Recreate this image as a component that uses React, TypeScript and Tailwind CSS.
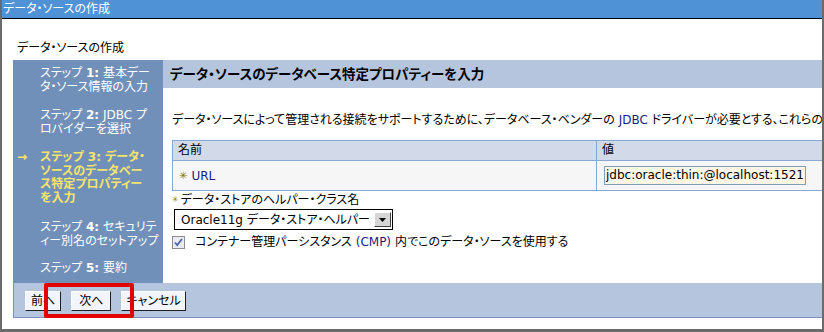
import React from "react";

const F = {
  fontFamily: '"DejaVu Sans", "Noto Sans CJK JP", sans-serif',
};

export default function App() {
  return (
    <div
      className="relative w-[824px] h-[332px] overflow-hidden bg-[#6b6b6b] text-black [font-feature-settings:'palt']"
      style={F}
    >
      <div className="absolute left-[2px] right-[2px] top-0 bottom-[3px] bg-white flex flex-col">
        {/* title bar */}
        <div className="h-[18px] bg-[#4f93d6] text-white text-[12px] leading-[18px] pl-[1px] whitespace-nowrap">
          データ・ソースの作成
        </div>
        <div className="h-[1px] bg-black" />
        {/* page title */}
        <div className="pl-[15px] pt-[21px] h-[41px] text-[12px] leading-[16px] whitespace-nowrap">
          データ・ソースの作成
        </div>
        {/* wizard */}
        <div className="ml-[11px] flex h-[223px]">
          <div className="w-[150px] shrink-0 bg-[#7190b9] text-white text-[12px] leading-[13.5px] pt-[7px] whitespace-nowrap overflow-hidden">
            <div className="pl-[27px]">
              ステップ <b>1:</b> 基本デー
              <br />
              タ・ソース情報の入力
            </div>
            <div className="pl-[27px] mt-[15px]">
              ステップ <b>2:</b> JDBC プ
              <br />
              ロバイダーを選択
            </div>
            <div className="flex mt-[15px] text-[#f6e46c] font-bold">
              <div className="w-[27px] pl-[4px]">→</div>
              <div>
                ステップ 3: データ・
                <br />
                ソースのデータベー
                <br />
                ス特定プロパティー
                <br />
                を入力
              </div>
            </div>
            <div className="pl-[27px] mt-[16px]">
              ステップ <b>4:</b> セキュリテ
              <br />
              ィー別名のセットアップ
            </div>
            <div className="pl-[27px] mt-[14px]">
              ステップ <b>5:</b> 要約
            </div>
          </div>
          <div className="flex-1 min-w-0 flex flex-col overflow-hidden">
            <div className="h-[28px] bg-[#b5c5de] text-[13.5px] font-bold leading-[28px] pl-[7px] whitespace-nowrap">
              データ・ソースのデータベース特定プロパティーを入力
            </div>
            <div className="pl-[9px] pt-[24px] h-[52px] text-[12px] leading-[16px] whitespace-nowrap">
              データ・ソースによって管理される接続をサポートするために、データベース・ベンダーの{" "}
              <span className="text-[#1c1c80]">JDBC</span> ドライバーが必要とする、これらのデータベース特定プロパティーを設定します。
            </div>
            <div className="ml-[9px] w-[680px] shrink-0 border border-[#8aa6d4]">
              <div className="flex h-[20px] bg-[#d2dae9] text-[12px] leading-[19px] border-b border-[#8aa6d4]">
                <div className="w-[424px] pl-[5px] border-r border-[#8aa6d4]">名前</div>
                <div className="pl-[5px]">値</div>
              </div>
              <div className="flex h-[29px] bg-[#f6f6f6] text-[12px]">
                <div className="w-[424px] pl-[6px] border-r border-[#8aa6d4] flex items-center">
                  <span className="text-[#8a7800] text-[10px] mr-[4px]">✳</span>
                  <span className="text-[#1c1c80]">URL</span>
                </div>
                <div className="pl-[7px] flex items-center">
                  <div className="w-[202px] h-[19px] bg-[#fff6e6] border border-[#7f9db9] text-[12px] leading-[17px] pl-[1px] overflow-hidden whitespace-nowrap">
                    jdbc:oracle:thin:@localhost:1521:ORCL
                  </div>
                </div>
              </div>
            </div>
            <div className="pl-[9px] mt-[1px] text-[12px] leading-[16px] flex items-center whitespace-nowrap">
              <span className="text-[#8a7800] text-[8px] mr-[2px]">✳</span>
              データ・ストアのヘルパー・クラス名
            </div>
            <div className="ml-[11px] mt-[1px] w-[219px] h-[21px] border border-black flex items-center text-[12px] pl-[6px] whitespace-nowrap">
              <span className="flex-1 overflow-hidden">Oracle11g データ・ストア・ヘルパー</span>
              <span className="w-[17px] h-[15px] mr-[1px] ml-[2px] shrink-0 bg-[#d6d6d6] border border-t-white border-l-white border-r-[#404040] border-b-[#404040] flex items-center justify-center">
                <svg width="7" height="4" viewBox="0 0 7 4">
                  <path d="M0 0h7L3.5 4z" fill="#000" />
                </svg>
              </span>
            </div>
            <div className="pl-[9px] mt-[4px] flex items-center text-[12px] leading-[16px] whitespace-nowrap">
              <span className="w-[13px] h-[13px] shrink-0 border border-[#8d8d8d] bg-[#e8ecf2] flex items-center justify-center mr-[10px]">
                <svg width="9" height="9" viewBox="0 0 9 9">
                  <path d="M1 4.5l2.2 2.5L8 1" stroke="#4d63a8" strokeWidth="1.8" fill="none" />
                </svg>
              </span>
              コンテナー管理パーシスタンス <span className="text-[#1c1c80] mx-[4px]">(CMP)</span> 内でこのデータ・ソースを使用する
            </div>
          </div>
        </div>
        {/* footer */}
        <div className="ml-[11px] h-[35px] bg-[#b5c5de] border-l border-b border-[#7a92bd] flex items-center gap-[10px] pl-[11px] pt-[1px]">
          <button className="h-[20px] px-[5px] py-0 bg-[#f2f5fb] text-[12px] leading-[18px] border border-t-white border-l-white border-r-[#202020] border-b-[#202020]">
            前へ
          </button>
          <button className="h-[20px] px-[7px] py-0 bg-[#f2f5fb] text-[12px] leading-[18px] border border-t-white border-l-white border-r-[#202020] border-b-[#202020]">
            次へ
          </button>
          <button className="h-[20px] px-[4px] py-0 bg-[#f2f5fb] text-[12px] leading-[18px] border border-t-white border-l-white border-r-[#202020] border-b-[#202020]">
            キャンセル
          </button>
        </div>
      </div>
      {/* red highlight */}
      <div className="absolute left-[44px] top-[283px] w-[90px] h-[35px] border-[4px] border-[#e30000] rounded-[2px]" />
    </div>
  );
}
